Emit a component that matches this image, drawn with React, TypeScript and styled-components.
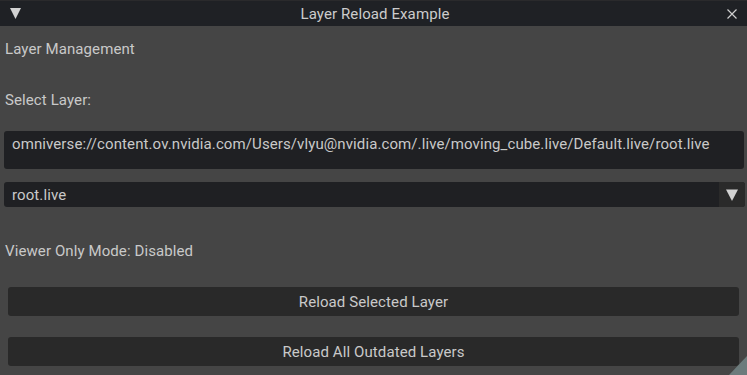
import styled, { createGlobalStyle } from "styled-components";

const GlobalStyle = createGlobalStyle`
    html, body {
        margin: 0;
        padding: 0;
        background: #454545;
    }
    * {
        box-sizing: border-box;
    }
`;

const App = () => {
    return (
        <Window>
            <GlobalStyle />
            <TitleBar>
                <CollapseArrow viewBox="0 0 11 11">
                    <polygon points="0,0 11,0 5.5,11" fill="#d2d2d2" />
                </CollapseArrow>
                <Title>Layer Reload Example</Title>
                <CloseIcon viewBox="0 0 10 10">
                    <path d="M0.5 0.5 L9.5 9.5 M9.5 0.5 L0.5 9.5" stroke="#cfcfcf" strokeWidth="1.2" />
                </CloseIcon>
            </TitleBar>
            <Content>
                <Label $height={51}>Layer Management</Label>
                <Label $height={42}>Select Layer:</Label>
                <PathField>
                    omniverse://content.ov.nvidia.com/Users/vlyu@nvidia.com/.live/moving_cube.live/Default.live/root.live
                </PathField>
                <Combo>
                    <ComboValue>root.live</ComboValue>
                    <ComboArrow>
                        <svg width="12" height="12" viewBox="0 0 12 12">
                            <polygon points="0,0.5 12,0.5 6,12" fill="#d2d2d2" />
                        </svg>
                    </ComboArrow>
                </Combo>
                <Label $height={47} $top={33}>Viewer Only Mode: Disabled</Label>
                <ButtonList>
                    <ActionButton>Reload Selected Layer</ActionButton>
                    <ActionButton>Reload All Outdated Layers</ActionButton>
                </ButtonList>
            </Content>
            <ResizeGrip viewBox="0 0 18 19">
                <polygon points="18,0 18,19 0,19" fill="#6c7b7c" />
            </ResizeGrip>
        </Window>
    );
};

export default App;

const Window = styled.div`
    position: relative;
    width: 747px;
    height: 375px;
    overflow: hidden;
    background: #454545;
    font-family: Roboto, "Liberation Sans", sans-serif;
    font-size: 15px;
    letter-spacing: 0.1px;
    color: #c9c9c9;
`;

const TitleBar = styled.div`
    display: flex;
    align-items: center;
    height: 26px;
    padding: 0 10px 0 10px;
    background: #1f2125;
    border-top: 1px solid #2a2a2c;
`;

const CollapseArrow = styled.svg`
    width: 11px;
    height: 11px;
    flex-shrink: 0;
`;

const Title = styled.div`
    flex: 1;
    text-align: center;
    color: #cccccc;
    padding-left: 2px;
`;

const CloseIcon = styled.svg`
    width: 10px;
    height: 10px;
    flex-shrink: 0;
`;

const Content = styled.div`
    display: flex;
    flex-direction: column;
    padding: 12px 2px 0 4px;
`;

const Label = styled.div<{ $height: number; $top?: number }>`
    height: ${(p) => p.$height}px;
    margin-top: ${(p) => p.$top ?? 0}px;
    padding-left: 1px;
    line-height: 22px;
`;

const PathField = styled.div`
    height: 38px;
    width: 740px;
    padding: 4px 8px 0 8px;
    background: #1f2023;
    border-radius: 3px;
    line-height: 19px;
    white-space: nowrap;
    overflow: hidden;
`;

const Combo = styled.div`
    display: flex;
    height: 25px;
    margin-top: 13px;
    width: 741px;
    background: #1f2023;
    border-radius: 3px;
    overflow: hidden;
`;

const ComboValue = styled.div`
    flex: 1;
    padding-left: 8px;
    line-height: 26px;
`;

const ComboArrow = styled.div`
    display: flex;
    align-items: center;
    justify-content: center;
    width: 26px;
    background: #2a2a2a;
`;

const ButtonList = styled.div`
    display: flex;
    flex-direction: column;
    gap: 21px;
    padding-left: 4px;
`;

const ActionButton = styled.button`
    all: unset;
    display: flex;
    align-items: center;
    justify-content: center;
    width: 731px;
    height: 29px;
    background: #292929;
    border-radius: 3px;
    font-family: Roboto, "Liberation Sans", sans-serif;
    font-size: 15px;
    letter-spacing: 0.1px;
    color: #c9c9c9;
`;

const ResizeGrip = styled.svg`
    position: absolute;
    right: 0;
    bottom: 0;
    width: 18px;
    height: 19px;
`;
